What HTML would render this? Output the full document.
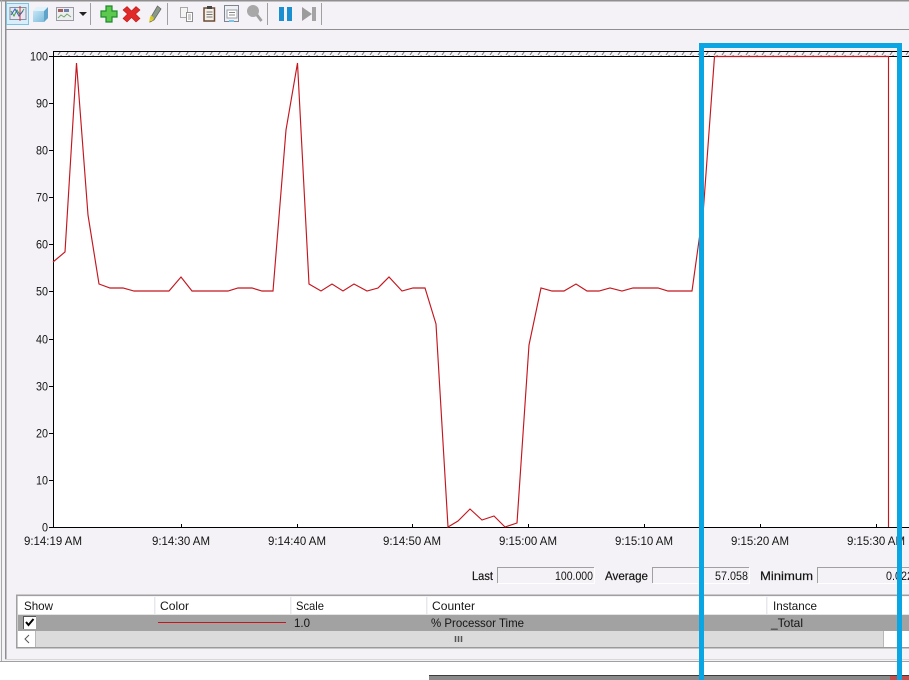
<!DOCTYPE html>
<html><head><meta charset="utf-8"><style>
html,body{margin:0;padding:0;background:#fff}
svg{display:block}
text{font-family:"Liberation Sans",sans-serif;font-size:12px;fill:#151515}
</style></head><body>
<svg width="909" height="680" viewBox="0 0 909 680" xmlns="http://www.w3.org/2000/svg" style="width:909px;height:680px;overflow:hidden">
<defs>
<pattern id="h" width="8" height="5" patternUnits="userSpaceOnUse"><path d="M2 5L5.500 0" stroke="#777" stroke-width="1" fill="none"/></pattern>
<pattern id="hr" width="8" height="5" patternUnits="userSpaceOnUse"><path d="M2 5L5.500 0" stroke="#8a7a7a" stroke-width="1" fill="none"/></pattern>
<linearGradient id="cube" x1="0" y1="0" x2="1" y2="1"><stop offset="0" stop-color="#d4eefa"/><stop offset="1" stop-color="#6fb4d8"/></linearGradient>
<filter id="soft" x="-5%" y="-5%" width="110%" height="110%"><feGaussianBlur stdDeviation="0.35"/></filter>
</defs>
<rect width="909" height="680" fill="#fff"/>
<rect x="0" y="0" width="909" height="661" fill="#f4f2f6"/>
<rect x="0" y="0" width="909" height="1.500" fill="#8f8f8f"/>
<rect x="1" y="0" width="1" height="661" fill="#a8a8a8"/>
<rect x="5" y="0" width="1.500" height="659" fill="#8f8f8f"/>
<rect x="5" y="29" width="904" height="1" fill="#8f8f8f"/>
<rect x="5" y="659" width="904" height="1" fill="#d8d8d8"/>
<rect x="0" y="661" width="909" height="1" fill="#a0a0a0"/>

<!-- toolbar -->
<rect x="6.500" y="3.500" width="22" height="21" fill="#d8eefa" stroke="#7cc4e6"/>
<g filter="url(#soft)">
<rect x="10" y="7.500" width="16" height="12" fill="#e8e8f4" stroke="#8a8fa0"/>
<path d="M11 11l3 5 3-6 3 5 4-6" stroke="#3aa040" fill="none"/>
<path d="M11 15l4-6 4 7 4-5" stroke="#3a60c0" fill="none"/>
<path d="M20 6v15" stroke="#d03030"/>
<path d="M33 11l4-4h11v11l-4 4H33z" fill="url(#cube)"/><path d="M44 11l4-4v11l-4 4z" fill="#5fa3c8"/><path d="M33 11l4-4h11l-4 4z" fill="#dff2fb"/>
<rect x="56.500" y="7.500" width="17" height="13" fill="#eeeef2" stroke="#9a9aa4"/>
<rect x="58" y="9" width="5" height="3" fill="#a06060"/><rect x="64" y="9" width="5" height="3" fill="#7080a8"/>
<path d="M58 18l3-3 3 2 3-3 4 3" stroke="#70a868" fill="none"/>
<path d="M79 12h8l-4 4z" fill="#222"/>
<path d="M106 6h6v5h5v6h-5v5h-6v-5h-5v-6h5z" fill="#5cc84e" stroke="#1f8a2a" stroke-width="1.200"/>
<path d="M127 6.500l4.500 4.500 4.500-4.500 4 3.500-4.500 4 4.500 4.500-4 3.500-4.500-4.500-4.500 4.500-4-3.500 4.500-4.500-4.500-4z" fill="#e02a2a" stroke="#c01818" stroke-width=".6"/>
<path d="M157.500 6l3.500 3-7 11-4 2 1-5z" fill="#8a9a88" stroke="#666" stroke-width=".8"/><path d="M149 22l1-5 3.500 3z" fill="#e4d420"/><path d="M151 15l3 3-1 2-3-2z" fill="#d8c820"/>
<path d="M180.500 7.500h7v10h-7z" fill="#f4f4f4" stroke="#a8a8a8"/><path d="M186.500 12.500h6v9h-6z" fill="#fff" stroke="#8e8e8e"/><path d="M188 15h3M188 17h3M188 19h3" stroke="#a0a0a0"/>
<rect x="204" y="8" width="10.500" height="13" fill="#f4f0e8" stroke="#6d4c34" stroke-width="1.500"/><rect x="207" y="6" width="5" height="3" fill="#444"/><path d="M206.500 12h6M206.500 14.500h6M206.500 17h6" stroke="#777"/>
<rect x="224.500" y="5.500" width="14" height="16" fill="#eef0f4" stroke="#7e8490"/><rect x="227" y="10" width="10" height="8" fill="#fff" stroke="#9aa0a8"/><path d="M229 12.500h6M229 15h6" stroke="#888"/><rect x="229" y="20" width="5" height="2" fill="#7cc4e6"/>
<circle cx="253" cy="11" r="6" fill="#a8a8a8"/><path d="M257 15l4.500 6" stroke="#a0a0a0" stroke-width="2.800"/>
<rect x="279" y="7" width="5" height="14" fill="#1d8fd0"/><rect x="287" y="7" width="5" height="14" fill="#1d8fd0"/>
<path d="M302 7l10 7-10 7z" fill="#9c9c9c"/><rect x="312" y="7" width="4" height="14" fill="#a4a4a4"/>
</g>
<rect x="90" y="3" width="1" height="22" fill="#a0a0a0"/>
<rect x="167" y="3" width="1" height="22" fill="#a0a0a0"/>
<rect x="267" y="3" width="1" height="22" fill="#a0a0a0"/>
<rect x="321" y="3" width="1" height="22" fill="#a0a0a0"/>

<!-- plot -->
<rect x="53" y="51" width="856" height="476" fill="#fff"/>
<rect x="53" y="51" width="856" height="5" fill="#f4f2f6"/>
<rect x="53" y="51" width="856" height="5" fill="url(#h)"/>
<rect x="53" y="51" width="856" height="1" fill="#000"/>
<rect x="53" y="56" width="856" height="1" fill="#000"/>
<rect x="53" y="527" width="856" height="1" fill="#000"/>
<rect x="53" y="51" width="1" height="477" fill="#000"/>
<path d="M49 56.500h4M49 103.500h4M49 150.500h4M49 197.500h4M49 244.500h4M49 291.500h4M49 339.500h4M49 386.500h4M49 433.500h4M49 480.500h4M49 527.500h4" stroke="#000"/>
<path d="M181.500 524v3M297.500 524v3M412.500 524v3M528.500 524v3M644.500 524v3M760.500 524v3M876.500 524v3" stroke="#000"/>
<polyline fill="none" stroke="#c4161e" stroke-width="1.150" points="53,262 65,252 76.500,63 88,215 99,284 110,288 123,288 134,291 169,291 181,277 192,291 228,291 238,288 252,288 262,291 273,291 286,130 297.500,63 309,284 321,291 332,284 343,291 354,284 367,291 378,288 389,277 402,291 413,288 425,288 436,324 448,527 458,521 470,509 482,520 494,516 505,527 517,523 529,345 541,288 552,291 564,291 576,284 587,291 599,291 610,288 622,291 633,288 658,288 668,291 692,291 703.500,208 714.500,56.500 888.500,56.500 888.500,527"/>

<!-- y labels -->
<g text-anchor="end">
<text x="48" y="60.500" textLength="18" lengthAdjust="spacingAndGlyphs">100</text>
<text x="48" y="107.500" textLength="12" lengthAdjust="spacingAndGlyphs">90</text>
<text x="48" y="154.500" textLength="12" lengthAdjust="spacingAndGlyphs">80</text>
<text x="48" y="201.500" textLength="12" lengthAdjust="spacingAndGlyphs">70</text>
<text x="48" y="248.500" textLength="12" lengthAdjust="spacingAndGlyphs">60</text>
<text x="48" y="295.500" textLength="12" lengthAdjust="spacingAndGlyphs">50</text>
<text x="48" y="343.500" textLength="12" lengthAdjust="spacingAndGlyphs">40</text>
<text x="48" y="390.500" textLength="12" lengthAdjust="spacingAndGlyphs">30</text>
<text x="48" y="437.500" textLength="12" lengthAdjust="spacingAndGlyphs">20</text>
<text x="48" y="484.500" textLength="12" lengthAdjust="spacingAndGlyphs">10</text>
<text x="48" y="531.500" textLength="6" lengthAdjust="spacingAndGlyphs">0</text>
</g>
<!-- x labels -->
<g>
<text x="24" y="545" textLength="58" lengthAdjust="spacingAndGlyphs">9:14:19 AM</text>
<text x="152" y="545" textLength="58" lengthAdjust="spacingAndGlyphs">9:14:30 AM</text>
<text x="268" y="545" textLength="58" lengthAdjust="spacingAndGlyphs">9:14:40 AM</text>
<text x="383" y="545" textLength="58" lengthAdjust="spacingAndGlyphs">9:14:50 AM</text>
<text x="499" y="545" textLength="58" lengthAdjust="spacingAndGlyphs">9:15:00 AM</text>
<text x="615" y="545" textLength="58" lengthAdjust="spacingAndGlyphs">9:15:10 AM</text>
<text x="731" y="545" textLength="58" lengthAdjust="spacingAndGlyphs">9:15:20 AM</text>
<text x="847" y="545" textLength="58" lengthAdjust="spacingAndGlyphs">9:15:30 AM</text>
</g>

<!-- stats -->
<g>
<text x="472" y="580" textLength="21" lengthAdjust="spacingAndGlyphs" stroke="#111" stroke-width=".2">Last</text>
<path d="M497.500 583V567.500H594" fill="none" stroke="#a0a0a0"/><path d="M498 583.500h96.500V568" fill="none" stroke="#fff"/>
<text x="555" y="580" textLength="38" lengthAdjust="spacingAndGlyphs">100.000</text>
<text x="605" y="580" textLength="43" lengthAdjust="spacingAndGlyphs" stroke="#111" stroke-width=".2">Average</text>
<path d="M652.500 583V567.500H749" fill="none" stroke="#a0a0a0"/><path d="M653 583.500h96.500V568" fill="none" stroke="#fff"/>
<text x="715" y="580" textLength="33" lengthAdjust="spacingAndGlyphs">57.058</text>
<text x="760" y="580" textLength="53" lengthAdjust="spacingAndGlyphs" stroke="#111" stroke-width=".2">Minimum</text>
<path d="M817.500 583V567.500H909" fill="none" stroke="#a0a0a0"/><path d="M818 583.500h91" fill="none" stroke="#fff"/>
<text x="886" y="580" textLength="27" lengthAdjust="spacingAndGlyphs">0.022</text>
</g>

<!-- table -->
<rect x="18" y="597" width="891" height="18" fill="#fff"/>
<rect x="16" y="594.500" width="893" height="1.500" fill="#a0a0a0"/>
<rect x="16" y="595" width="1.500" height="53" fill="#a0a0a0"/>
<rect x="154" y="597" width="1.500" height="17" fill="#e8e8ec"/>
<rect x="290" y="597" width="1.500" height="17" fill="#e8e8ec"/>
<rect x="426" y="597" width="1.500" height="17" fill="#e8e8ec"/>
<rect x="766" y="597" width="1.500" height="17" fill="#e8e8ec"/>
<rect x="18" y="614.500" width="891" height="1" fill="#c8c8c8"/>
<rect x="18" y="615" width="891" height="16" fill="#a3a2a3"/>
<rect x="18" y="631" width="891" height="16" fill="#dbdbdb"/>
<rect x="18" y="631" width="17" height="16" fill="#fff"/>
<rect x="35" y="631" width="1" height="16" fill="#b8b8b8"/>
<rect x="883" y="631" width="1" height="16" fill="#b8b8b8"/>
<rect x="884" y="631" width="25" height="16" fill="#fff"/>
<rect x="16" y="647" width="893" height="1.500" fill="#9a9a9a"/>
<path d="M29 635l-4 4 4 4" fill="none" stroke="#555" stroke-width="1"/>
<path d="M455.500 636v6M458.500 636v6M461.500 636v6" stroke="#555" stroke-width="1.500"/>
<g>
<text x="24" y="610" textLength="29" lengthAdjust="spacingAndGlyphs">Show</text>
<text x="160" y="610" textLength="29" lengthAdjust="spacingAndGlyphs">Color</text>
<text x="296" y="610" textLength="28" lengthAdjust="spacingAndGlyphs">Scale</text>
<text x="432" y="610" textLength="43" lengthAdjust="spacingAndGlyphs">Counter</text>
<text x="773" y="610" textLength="44" lengthAdjust="spacingAndGlyphs">Instance</text>
<text x="294" y="627" textLength="16" lengthAdjust="spacingAndGlyphs">1.0</text>
<text x="431" y="627" textLength="93" lengthAdjust="spacingAndGlyphs">% Processor Time</text>
<text x="771" y="627" textLength="32" lengthAdjust="spacingAndGlyphs">_Total</text>
</g>
<rect x="23" y="616" width="13" height="13" fill="#fff"/>
<path d="M23.500 629V616.500H36" fill="none" stroke="#555"/>
<path d="M26 622l2.500 3 5-6" fill="none" stroke="#000" stroke-width="2"/>
<rect x="158" y="622" width="128" height="1" fill="#c4161e"/>

<!-- taskbar sliver -->
<rect x="429" y="675" width="480" height="5" fill="#8a8a8a"/>
<rect x="429" y="675" width="480" height="1" fill="#3c3c3c"/>
<rect x="890" y="676" width="19" height="4" fill="#c0504d"/>

<!-- blue highlight -->
<path d="M701.500 680V45.500H899.500V680" fill="none" stroke="#0aa5e3" stroke-width="5"/>
</svg>
</body></html>
